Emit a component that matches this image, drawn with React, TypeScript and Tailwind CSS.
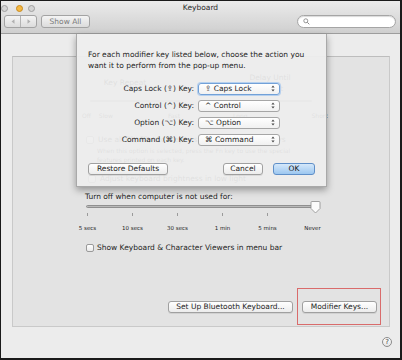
import type { ReactNode } from "react";

const UpDown = () => (
  <svg width="4" height="7" viewBox="0 0 4 7" className="shrink-0">
    <path d="M0.4 2.6 L2 0.6 L3.6 2.6 Z" fill="#444" />
    <path d="M0.4 4.4 L2 6.4 L3.6 4.4 Z" fill="#444" />
  </svg>
);

const Btn = ({ children, className = "" }: { children: ReactNode; className?: string }) => (
  <div
    className={`flex h-[12px] items-center justify-center rounded-[3px] border border-[#a0a0a0] bg-linear-to-b from-white to-[#ececec] text-[7.5px] leading-none text-[#1e1e1e] shadow-[0_1px_0_rgba(0,0,0,0.08)] ${className}`}
  >
    {children}
  </div>
);

const Popup = ({ label, focus }: { label: string; focus?: boolean }) => (
  <div
    className={`flex h-[12px] w-[82px] items-center justify-between rounded-[3px] border bg-linear-to-b from-white to-[#f1f1f1] pl-[6px] pr-[4px] ${
      focus ? "border-[#72a1d8] shadow-[0_0_0_1px_#b6d0ee]" : "border-[#a6a6a6]"
    }`}
  >
    <span>{label}</span>
    <UpDown />
  </div>
);

const Checkbox = () => (
  <div className="h-[8px] w-[8px] shrink-0 rounded-[2px] border border-[#9a9a9a] bg-linear-to-b from-white to-[#eaeaea]" />
);

const modifiers = [
  { key: "Caps Lock (⇪) Key:", value: "⇪ Caps Lock", focus: true },
  { key: "Control (^) Key:", value: "^ Control" },
  { key: "Option (⌥) Key:", value: "⌥ Option" },
  { key: "Command (⌘) Key:", value: "⌘ Command" },
];

const stops = ["5 secs", "10 secs", "30 secs", "1 min", "5 mins", "Never"];

export default function App() {
  return (
    <div className="relative flex h-[360px] w-[402px] flex-col overflow-hidden border border-r-2 border-b-2 border-[#1a1a1a] bg-[#ececec] font-['DejaVu_Sans',sans-serif] text-[7.5px] text-[#1e1e1e]">
      {/* title bar + toolbar */}
      <div className="h-[33px] shrink-0 border-b border-[#9d9d9d] bg-linear-to-b from-[#ebebeb] to-[#cfcfcf]">
        <div className="grid h-[14px] grid-cols-[1fr_auto_1fr] items-center">
          <div className="flex items-center">
            <span className="h-[7px] w-[7px] rounded-full border border-[#9f9f9f] bg-[#d4d4d4]" />
            <span className="ml-[8px] h-[7px] w-[7px] rounded-full border border-[#c98a1e] bg-[#f4b842]" />
            <span className="ml-[5px] h-[7px] w-[7px] rounded-full border border-[#9f9f9f] bg-[#d4d4d4]" />
          </div>
          <span className="text-[7.5px] text-[#2a2a2a]">Keyboard</span>
          <span />
        </div>
        <div className="flex h-[13px] items-center">
          <div className="ml-[3px] flex h-[13px] w-[33px] rounded-[3px] border border-[#a3a3a3] bg-linear-to-b from-[#f4f4f4] to-[#dcdcdc]">
            <div className="flex flex-1 items-center justify-center border-r border-[#b3b3b3]">
              <svg width="4" height="5" viewBox="0 0 4 5">
                <path d="M3.5 0.3 L0.5 2.5 L3.5 4.7 Z" fill="#b0b0b0" />
              </svg>
            </div>
            <div className="flex flex-1 items-center justify-center">
              <svg width="4" height="5" viewBox="0 0 4 5">
                <path d="M0.5 0.3 L3.5 2.5 L0.5 4.7 Z" fill="#b0b0b0" />
              </svg>
            </div>
          </div>
          <div className="ml-[4px] flex h-[13px] w-[49px] items-center justify-center rounded-[3px] border border-[#a3a3a3] bg-linear-to-b from-[#f4f4f4] to-[#dcdcdc] text-[7.5px] text-[#7a7a7a]">
            Show All
          </div>
          <div className="ml-auto mr-[4px] flex h-[13px] w-[99px] items-center rounded-full border border-[#a5a5a5] bg-white pl-[5px] shadow-[inset_0_1px_1px_rgba(0,0,0,0.15)]">
            <svg width="7" height="7" viewBox="0 0 7 7">
              <circle cx="2.8" cy="2.8" r="2" fill="none" stroke="#8a8a8a" strokeWidth="0.9" />
              <path d="M4.3 4.3 L6.3 6.3" stroke="#8a8a8a" strokeWidth="1" />
            </svg>
          </div>
        </div>
      </div>

      {/* tab panel */}
      <div className="ml-[11px] mt-[22px] flex h-[271px] w-[378px] shrink-0 flex-col border border-[#c9c9c9] border-t-[#bdbdbd] bg-[#e3e3e3]">
        <div className="mt-[21px] flex h-[10px] items-center">
          <span className="ml-[78px] w-[68px] text-center">Key Repeat</span>
          <span className="ml-[76px] w-[70px] text-center">Delay Until Repeat</span>
        </div>
        <div className="mt-[12px] flex h-[2px]">
          <div className="ml-[77px] w-[90px] rounded bg-[#a8a8a8]" />
          <div className="ml-[52px] w-[80px] rounded bg-[#a8a8a8]" />
        </div>
        <div className="mt-[9px] flex h-[8px] items-center text-[6px]">
          <span className="ml-[69px]">Off</span>
          <span className="ml-[8px]">Slow</span>
          <span className="ml-[55px]">Fast</span>
          <span className="ml-[53px]">Long</span>
          <span className="ml-[64px]">Short</span>
        </div>
        <div className="mt-[16px] flex h-[10px] items-center gap-[4px] pl-[73px]">
          <Checkbox />
          <span>Use all F1, F2, etc. keys as standard function keys</span>
        </div>
        <div className="mt-[1px] pl-[84px] text-[6px] leading-[9px]">
          When this option is selected, press the Fn key to use the special
          <br />
          features printed on each key.
        </div>
        <div className="mt-[10px] flex h-[10px] items-center gap-[4px] pl-[75px]">
          <Checkbox />
          <span>Adjust keyboard brightness in low light</span>
        </div>
        <div className="mt-[8px] flex h-[10px] items-center pl-[72px]">Turn off when computer is not used for:</div>
        <div className="ml-[52px] mt-[1px] w-[270px]">
          <div className="relative ml-[21px] mr-[19px] mt-[2px] h-[3px] rounded-full border border-[#8f8f8f] bg-[#b9b9b9]">
            <svg
              width="11"
              height="13"
              viewBox="0 0 11 13"
              className="absolute right-[-6px] top-[-5px]"
            >
              <path
                d="M1 1.5 Q1 0.5 2 0.5 L9 0.5 Q10 0.5 10 1.5 L10 7.5 L5.5 12 L1 7.5 Z"
                fill="#fbfbfb"
                stroke="#8d8d8d"
                strokeWidth="0.8"
              />
            </svg>
          </div>
          <div className="mt-[5px] grid grid-cols-6">
            {stops.map((s, i) => (
              <div key={s} className="flex justify-center">
                <div className={`h-[3px] w-px ${i === 5 ? "bg-transparent" : "bg-[#9a9a9a]"}`} />
              </div>
            ))}
          </div>
          <div className="mt-[8px] grid grid-cols-6 text-[5.5px] leading-[8px]">
            {stops.map((s) => (
              <span key={s} className="text-center">
                {s}
              </span>
            ))}
          </div>
        </div>
        <div className="mt-[11px] flex h-[10px] items-center gap-[3px] pl-[73px]">
          <Checkbox />
          <span>Show Keyboard &amp; Character Viewers in menu bar</span>
        </div>
        <div className="mb-[1px] mt-auto flex items-center justify-end gap-[4px] pr-[8px]">
          <Btn className="w-[125px]">Set Up Bluetooth Keyboard...</Btn>
          <div className="flex h-[37px] w-[84px] items-center border border-[#d96b6b] pl-[4px]">
            <Btn className="w-[75px]">Modifier Keys...</Btn>
          </div>
        </div>
      </div>

      <div className="mt-[10px] flex justify-end pr-[8px]">
        <div className="flex h-[10px] w-[10px] items-center justify-center rounded-full border border-[#8c8c8c] bg-linear-to-b from-white to-[#e4e4e4] text-[7px] leading-none text-[#333]">
          ?
        </div>
      </div>

      {/* modifier keys sheet */}
      <div className="absolute left-[75px] top-[33px] flex h-[153px] w-[251px] flex-col border-x border-b border-[#a9a9a9] bg-[#eeeeee]/[0.93] shadow-[0_3px_7px_rgba(0,0,0,0.35)]">
        <p className="pl-[11px] pt-[15px] leading-[11px]">
          For each modifier key listed below, choose the action you
          <br />
          want it to perform from the pop-up menu.
        </p>
        <div className="mt-[9px] flex flex-col">
          {modifiers.map((m) => (
            <div key={m.key} className="flex h-[17px] items-center">
              <span className="w-[117px] text-right">{m.key}</span>
              <div className="ml-[4px]">
                <Popup label={m.value} focus={m.focus} />
              </div>
            </div>
          ))}
        </div>
        <div className="mt-[15px] flex items-center px-[11px]">
          <Btn className="w-[80px]">Restore Defaults</Btn>
          <Btn className="ml-auto w-[40px]">Cancel</Btn>
          <div className="ml-[10px] flex h-[12px] w-[42px] items-center justify-center rounded-[3px] border border-[#5f8fc8] bg-linear-to-b from-[#d5e8fa] to-[#9cc7f0] text-[7.5px] leading-none text-[#111]">
            OK
          </div>
        </div>
      </div>
    </div>
  );
}
